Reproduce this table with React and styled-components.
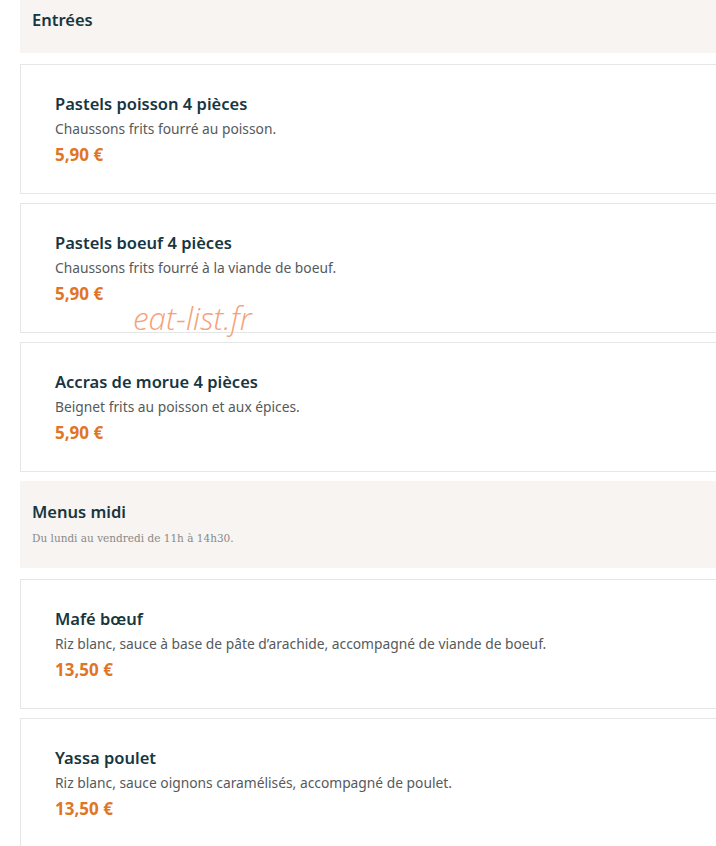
import React from 'react';
import styled, { createGlobalStyle } from 'styled-components';

const GlobalStyle = createGlobalStyle`
  html, body {
    margin: 0;
    padding: 0;
    background: #ffffff;
    overflow: hidden;
  }
`;

const Page = styled.main`
  position: relative;
  margin-top: -11px;
  padding-left: 20px;
  width: 706px;
  display: flex;
  flex-direction: column;
  gap: 9px;
  font-family: 'Noto Sans', 'Lato', sans-serif;
`;

const SectionHeader = styled.header`
  background: #f7f4f1;
  padding: 20px 12px 22px;
  margin-bottom: 2px;
`;

const SectionTitle = styled.h2`
  margin: 0;
  font-size: 16.5px;
  line-height: 22px;
  font-weight: 600;
  color: #173641;
`;

const SectionNote = styled.p`
  margin: 7px 0 0;
  font-family: 'DejaVu Serif', serif;
  font-size: 10.5px;
  line-height: 16px;
  color: #8a8a8a;
`;

const Card = styled.article`
  border: 1px solid #e6e6e6;
  background: #fff;
  padding: 28px 34px;
  display: flex;
  flex-direction: column;
`;

const DishName = styled.h3`
  margin: 0;
  font-size: 16.5px;
  line-height: 22px;
  font-weight: 600;
  color: #173641;
`;

const DishText = styled.p`
  margin: 5px 0 0;
  font-size: 13.8px;
  line-height: 18px;
  color: #555a5c;
`;

const Price = styled.span`
  margin-top: 7px;
  font-size: 17px;
  line-height: 20px;
  font-weight: 700;
  color: #e07526;
`;

const Watermark = styled.div`
  position: absolute;
  left: 133px;
  top: 311px;
  font-family: 'Open Sans', sans-serif;
  font-style: italic;
  font-weight: 300;
  font-size: 31.5px;
  line-height: 36px;
  color: #f5a27a;
  pointer-events: none;
`;

const sections = [
  {
    title: 'Entrées',
    dishes: [
      { name: 'Pastels poisson 4 pièces', text: 'Chaussons frits fourré au poisson.', price: '5,90 €' },
      { name: 'Pastels boeuf 4 pièces', text: 'Chaussons frits fourré à la viande de boeuf.', price: '5,90 €' },
      { name: 'Accras de morue 4 pièces', text: 'Beignet frits au poisson et aux épices.', price: '5,90 €' },
    ],
  },
  {
    title: 'Menus midi',
    note: 'Du lundi au vendredi de 11h à 14h30.',
    dishes: [
      { name: 'Mafé bœuf', text: 'Riz blanc, sauce à base de pâte d’arachide, accompagné de viande de boeuf.', price: '13,50 €' },
      { name: 'Yassa poulet', text: 'Riz blanc, sauce oignons caramélisés, accompagné de poulet.', price: '13,50 €' },
    ],
  },
];

export default function App() {
  return (
    <>
      <GlobalStyle />
      <Page>
        {sections.map((s) => (
          <React.Fragment key={s.title}>
            <SectionHeader>
              <SectionTitle>{s.title}</SectionTitle>
              {s.note && <SectionNote>{s.note}</SectionNote>}
            </SectionHeader>
            {s.dishes.map((d) => (
              <Card key={d.name}>
                <DishName>{d.name}</DishName>
                <DishText>{d.text}</DishText>
                <Price>{d.price}</Price>
              </Card>
            ))}
          </React.Fragment>
        ))}
        <Watermark>eat-list.fr</Watermark>
      </Page>
    </>
  );
}
